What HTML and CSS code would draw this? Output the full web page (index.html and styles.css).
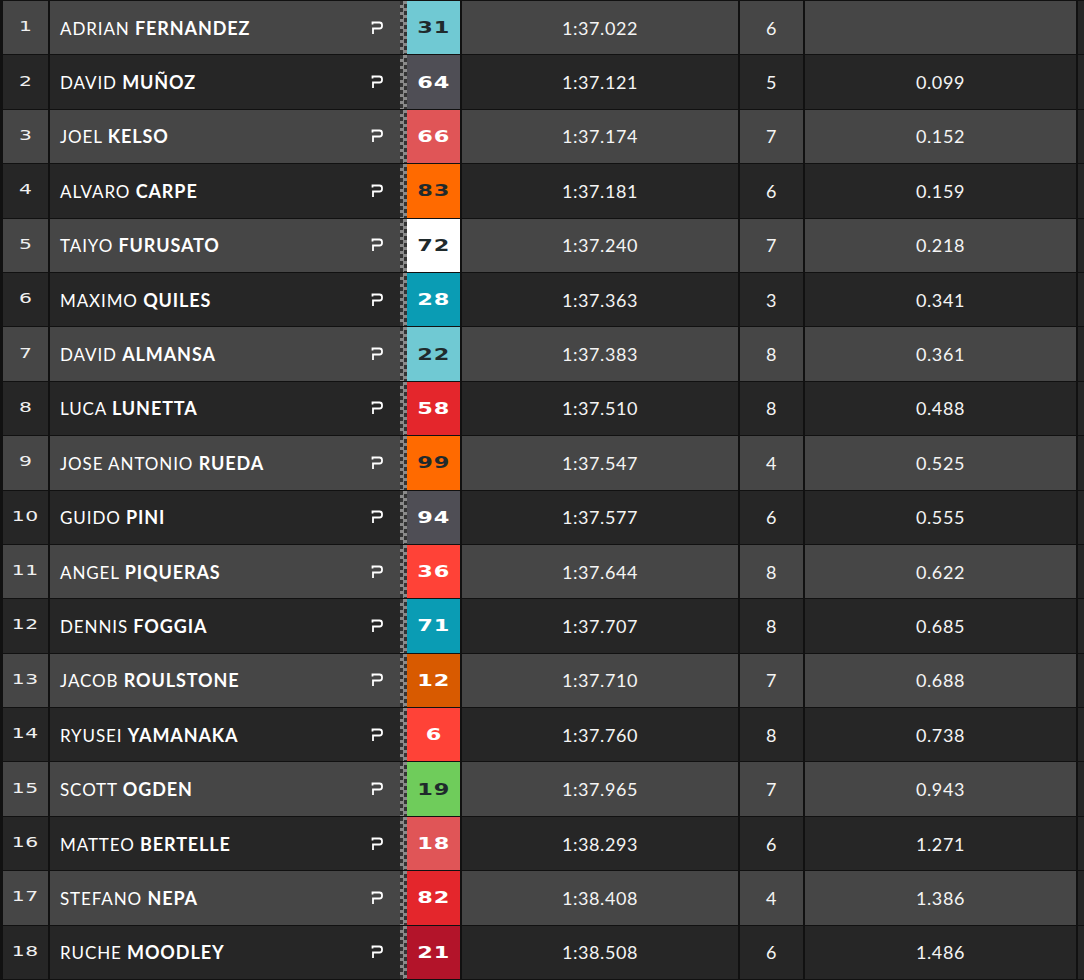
FILE: index.html
```html
<!DOCTYPE html>
<html>
<head>
<meta charset="utf-8">
<link rel="stylesheet" href="styles.css">
</head>
<body>
<div class="board">
  <div class="row light"><div class="pos"><span>1</span></div><div class="rider"><div class="name"><span class="label"><span class="first">ADRIAN</span> <span class="last">FERNANDEZ</span></span><svg class="pit" viewBox="0 0 12 14"><path d="M1.5 3.5V1.5H8.5Q11 1.5 11 4V5Q11 7.5 8.5 7.5H2V13"/></svg></div><div class="flag"></div><div class="num c-teal dark-t"><span>31</span></div></div><div class="time">1:37.022</div><div class="laps">6</div><div class="gap"></div><div class="edge"></div></div>
  <div class="row dark"><div class="pos"><span>2</span></div><div class="rider"><div class="name"><span class="label"><span class="first">DAVID</span> <span class="last">MUÑOZ</span></span><svg class="pit" viewBox="0 0 12 14"><path d="M1.5 3.5V1.5H8.5Q11 1.5 11 4V5Q11 7.5 8.5 7.5H2V13"/></svg></div><div class="flag"></div><div class="num c-grey"><span>64</span></div></div><div class="time">1:37.121</div><div class="laps">5</div><div class="gap">0.099</div><div class="edge"></div></div>
  <div class="row light"><div class="pos"><span>3</span></div><div class="rider"><div class="name"><span class="label"><span class="first">JOEL</span> <span class="last">KELSO</span></span><svg class="pit" viewBox="0 0 12 14"><path d="M1.5 3.5V1.5H8.5Q11 1.5 11 4V5Q11 7.5 8.5 7.5H2V13"/></svg></div><div class="flag"></div><div class="num c-rose"><span>66</span></div></div><div class="time">1:37.174</div><div class="laps">7</div><div class="gap">0.152</div><div class="edge"></div></div>
  <div class="row dark"><div class="pos"><span>4</span></div><div class="rider"><div class="name"><span class="label"><span class="first">ALVARO</span> <span class="last">CARPE</span></span><svg class="pit" viewBox="0 0 12 14"><path d="M1.5 3.5V1.5H8.5Q11 1.5 11 4V5Q11 7.5 8.5 7.5H2V13"/></svg></div><div class="flag"></div><div class="num c-orange dark-t"><span>83</span></div></div><div class="time">1:37.181</div><div class="laps">6</div><div class="gap">0.159</div><div class="edge"></div></div>
  <div class="row light"><div class="pos"><span>5</span></div><div class="rider"><div class="name"><span class="label"><span class="first">TAIYO</span> <span class="last">FURUSATO</span></span><svg class="pit" viewBox="0 0 12 14"><path d="M1.5 3.5V1.5H8.5Q11 1.5 11 4V5Q11 7.5 8.5 7.5H2V13"/></svg></div><div class="flag"></div><div class="num c-white dark-t"><span>72</span></div></div><div class="time">1:37.240</div><div class="laps">7</div><div class="gap">0.218</div><div class="edge"></div></div>
  <div class="row dark"><div class="pos"><span>6</span></div><div class="rider"><div class="name"><span class="label"><span class="first">MAXIMO</span> <span class="last">QUILES</span></span><svg class="pit" viewBox="0 0 12 14"><path d="M1.5 3.5V1.5H8.5Q11 1.5 11 4V5Q11 7.5 8.5 7.5H2V13"/></svg></div><div class="flag"></div><div class="num c-cyan"><span>28</span></div></div><div class="time">1:37.363</div><div class="laps">3</div><div class="gap">0.341</div><div class="edge"></div></div>
  <div class="row light"><div class="pos"><span>7</span></div><div class="rider"><div class="name"><span class="label"><span class="first">DAVID</span> <span class="last">ALMANSA</span></span><svg class="pit" viewBox="0 0 12 14"><path d="M1.5 3.5V1.5H8.5Q11 1.5 11 4V5Q11 7.5 8.5 7.5H2V13"/></svg></div><div class="flag"></div><div class="num c-teal dark-t"><span>22</span></div></div><div class="time">1:37.383</div><div class="laps">8</div><div class="gap">0.361</div><div class="edge"></div></div>
  <div class="row dark"><div class="pos"><span>8</span></div><div class="rider"><div class="name"><span class="label"><span class="first">LUCA</span> <span class="last">LUNETTA</span></span><svg class="pit" viewBox="0 0 12 14"><path d="M1.5 3.5V1.5H8.5Q11 1.5 11 4V5Q11 7.5 8.5 7.5H2V13"/></svg></div><div class="flag"></div><div class="num c-red"><span>58</span></div></div><div class="time">1:37.510</div><div class="laps">8</div><div class="gap">0.488</div><div class="edge"></div></div>
  <div class="row light"><div class="pos"><span>9</span></div><div class="rider"><div class="name"><span class="label"><span class="first">JOSE ANTONIO</span> <span class="last">RUEDA</span></span><svg class="pit" viewBox="0 0 12 14"><path d="M1.5 3.5V1.5H8.5Q11 1.5 11 4V5Q11 7.5 8.5 7.5H2V13"/></svg></div><div class="flag"></div><div class="num c-orange dark-t"><span>99</span></div></div><div class="time">1:37.547</div><div class="laps">4</div><div class="gap">0.525</div><div class="edge"></div></div>
  <div class="row dark"><div class="pos"><span>10</span></div><div class="rider"><div class="name"><span class="label"><span class="first">GUIDO</span> <span class="last">PINI</span></span><svg class="pit" viewBox="0 0 12 14"><path d="M1.5 3.5V1.5H8.5Q11 1.5 11 4V5Q11 7.5 8.5 7.5H2V13"/></svg></div><div class="flag"></div><div class="num c-grey"><span>94</span></div></div><div class="time">1:37.577</div><div class="laps">6</div><div class="gap">0.555</div><div class="edge"></div></div>
  <div class="row light"><div class="pos"><span>11</span></div><div class="rider"><div class="name"><span class="label"><span class="first">ANGEL</span> <span class="last">PIQUERAS</span></span><svg class="pit" viewBox="0 0 12 14"><path d="M1.5 3.5V1.5H8.5Q11 1.5 11 4V5Q11 7.5 8.5 7.5H2V13"/></svg></div><div class="flag"></div><div class="num c-coral"><span>36</span></div></div><div class="time">1:37.644</div><div class="laps">8</div><div class="gap">0.622</div><div class="edge"></div></div>
  <div class="row dark"><div class="pos"><span>12</span></div><div class="rider"><div class="name"><span class="label"><span class="first">DENNIS</span> <span class="last">FOGGIA</span></span><svg class="pit" viewBox="0 0 12 14"><path d="M1.5 3.5V1.5H8.5Q11 1.5 11 4V5Q11 7.5 8.5 7.5H2V13"/></svg></div><div class="flag"></div><div class="num c-cyan"><span>71</span></div></div><div class="time">1:37.707</div><div class="laps">8</div><div class="gap">0.685</div><div class="edge"></div></div>
  <div class="row light"><div class="pos"><span>13</span></div><div class="rider"><div class="name"><span class="label"><span class="first">JACOB</span> <span class="last">ROULSTONE</span></span><svg class="pit" viewBox="0 0 12 14"><path d="M1.5 3.5V1.5H8.5Q11 1.5 11 4V5Q11 7.5 8.5 7.5H2V13"/></svg></div><div class="flag"></div><div class="num c-burnt"><span>12</span></div></div><div class="time">1:37.710</div><div class="laps">7</div><div class="gap">0.688</div><div class="edge"></div></div>
  <div class="row dark"><div class="pos"><span>14</span></div><div class="rider"><div class="name"><span class="label"><span class="first">RYUSEI</span> <span class="last">YAMANAKA</span></span><svg class="pit" viewBox="0 0 12 14"><path d="M1.5 3.5V1.5H8.5Q11 1.5 11 4V5Q11 7.5 8.5 7.5H2V13"/></svg></div><div class="flag"></div><div class="num c-coral"><span>6</span></div></div><div class="time">1:37.760</div><div class="laps">8</div><div class="gap">0.738</div><div class="edge"></div></div>
  <div class="row light"><div class="pos"><span>15</span></div><div class="rider"><div class="name"><span class="label"><span class="first">SCOTT</span> <span class="last">OGDEN</span></span><svg class="pit" viewBox="0 0 12 14"><path d="M1.5 3.5V1.5H8.5Q11 1.5 11 4V5Q11 7.5 8.5 7.5H2V13"/></svg></div><div class="flag"></div><div class="num c-green dark-t"><span>19</span></div></div><div class="time">1:37.965</div><div class="laps">7</div><div class="gap">0.943</div><div class="edge"></div></div>
  <div class="row dark"><div class="pos"><span>16</span></div><div class="rider"><div class="name"><span class="label"><span class="first">MATTEO</span> <span class="last">BERTELLE</span></span><svg class="pit" viewBox="0 0 12 14"><path d="M1.5 3.5V1.5H8.5Q11 1.5 11 4V5Q11 7.5 8.5 7.5H2V13"/></svg></div><div class="flag"></div><div class="num c-rose"><span>18</span></div></div><div class="time">1:38.293</div><div class="laps">6</div><div class="gap">1.271</div><div class="edge"></div></div>
  <div class="row light"><div class="pos"><span>17</span></div><div class="rider"><div class="name"><span class="label"><span class="first">STEFANO</span> <span class="last">NEPA</span></span><svg class="pit" viewBox="0 0 12 14"><path d="M1.5 3.5V1.5H8.5Q11 1.5 11 4V5Q11 7.5 8.5 7.5H2V13"/></svg></div><div class="flag"></div><div class="num c-red"><span>82</span></div></div><div class="time">1:38.408</div><div class="laps">4</div><div class="gap">1.386</div><div class="edge"></div></div>
  <div class="row dark"><div class="pos"><span>18</span></div><div class="rider"><div class="name"><span class="label"><span class="first">RUCHE</span> <span class="last">MOODLEY</span></span><svg class="pit" viewBox="0 0 12 14"><path d="M1.5 3.5V1.5H8.5Q11 1.5 11 4V5Q11 7.5 8.5 7.5H2V13"/></svg></div><div class="flag"></div><div class="num c-crimson"><span>21</span></div></div><div class="time">1:38.508</div><div class="laps">6</div><div class="gap">1.486</div><div class="edge"></div></div>
</div>
</body>
</html>
```

FILE: styles.css
```css
html, body {
  margin: 0;
  padding: 0;
  background: #111111;
}

.board {
  width: 1084px;
  height: 980px;
  padding-top: 1px;
  box-sizing: border-box;
  display: flex;
  flex-direction: column;
  gap: 1px;
  background: #111111;
  font-family: "Lato", "Liberation Sans", sans-serif;
  color: #ffffff;
}

.row {
  height: 53.4px;
  display: grid;
  grid-template-columns: 45px 410px 276px 63px 271px 6px;
  column-gap: 2px;
  padding-left: 3px;
}

.row.light .pos, .row.light .name, .row.light .time,
.row.light .laps, .row.light .gap { background: #464646; }
.row.dark .pos, .row.dark .name, .row.dark .time,
.row.dark .laps, .row.dark .gap { background: #262626; }

.edge { background: #262626; }

.pos {
  display: flex;
  align-items: center;
  justify-content: center;
  padding-bottom: 3px;
  box-sizing: border-box;
  font-family: "DejaVu Sans", sans-serif;
  font-size: 14px;
  font-weight: 400;
  color: #f0f0f0;
}

.pos span {
  display: inline-block;
  transform: scaleX(1.45);
  letter-spacing: 0.3px;
}

.rider {
  display: flex;
}

.name {
  width: 350px;
  display: flex;
  align-items: center;
  padding-left: 10px;
  box-sizing: border-box;
}

.label {
  font-size: 17px;
  white-space: nowrap;
  letter-spacing: 0.9px;
}

.first {
  font-weight: 400;
}

.last {
  font-weight: 700;
  font-size: 18px;
  letter-spacing: 0.9px;
}

.pit {
  width: 12px;
  height: 14px;
  margin-left: auto;
  margin-right: 17px;
  fill: none;
  stroke: #ffffff;
  stroke-width: 1.8;
}

.flag {
  width: 7px;
  background-color: #333333;
  background-image: conic-gradient(#8a8a8a 0 25%, #333333 0 50%, #8a8a8a 0 75%, #333333 0);
  background-size: 7px 7px;
}

.num {
  width: 53px;
  display: flex;
  align-items: center;
  justify-content: center;
  color: #ffffff;
  font-family: "DejaVu Sans", sans-serif;
  font-weight: 700;
  font-size: 16px;
}

.num span {
  display: inline-block;
  transform: scaleX(1.4);
  letter-spacing: 0.5px;
}

.num.dark-t { color: #1f2a2c; }

.c-teal { background: #70c9d3; }
.c-grey { background: #4f4e55; }
.c-rose { background: #e05557; }
.c-orange { background: #ff6a00; }
.c-white { background: #ffffff; }
.c-cyan { background: #0a9cb4; }
.c-red { background: #e4262c; }
.c-coral { background: #ff4237; }
.c-burnt { background: #d85a00; }
.c-green { background: #6fcc5b; }
.c-crimson { background: #b3142a; }

.time, .laps, .gap {
  display: flex;
  align-items: center;
  justify-content: center;
  font-size: 18px;
  font-weight: 400;
  letter-spacing: 0.6px;
  color: #f4f4f4;
}
```
